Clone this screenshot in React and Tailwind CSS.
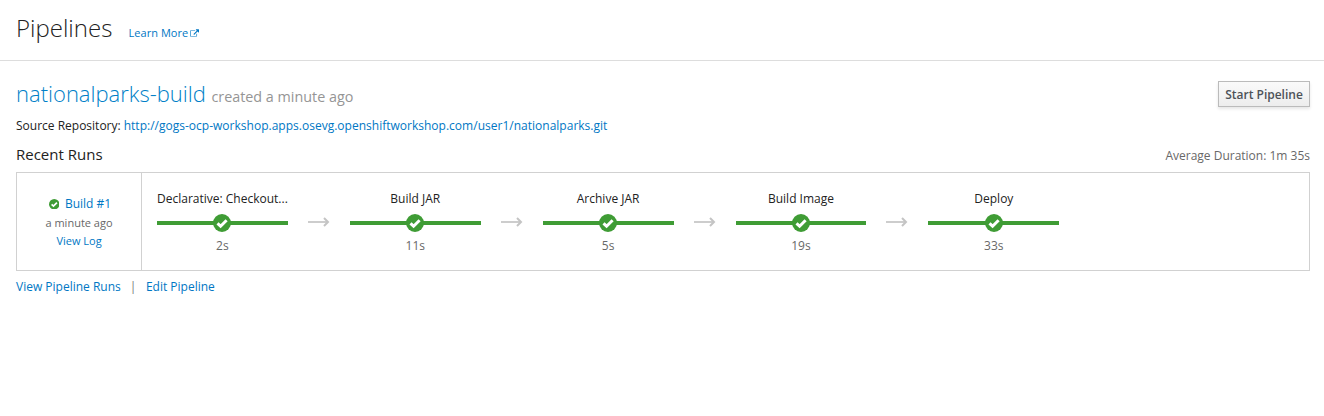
const stages = [
  { name: 'Declarative: Checkout...', time: '2s' },
  { name: 'Build JAR', time: '11s' },
  { name: 'Archive JAR', time: '5s' },
  { name: 'Build Image', time: '19s' },
  { name: 'Deploy', time: '33s' },
];

function ExternalLink() {
  return (
    <svg className="ml-[2px] h-[9px] w-[9px]" viewBox="0 0 1792 1664" fill="currentColor">
      <path d="M1408 928v320q0 119-84.500 203.500t-203.500 84.500h-832q-119 0-203.500-84.500t-84.500-203.500v-832q0-119 84.500-203.500t203.500-84.500h704q14 0 23 9t9 23v64q0 14-9 23t-23 9h-704q-66 0-113 47t-47 113v832q0 66 47 113t113 47h832q66 0 113-47t47-113v-320q0-14 9-23t23-9h64q14 0 23 9t9 23zm384-864v512q0 26-19 45t-45 19-45-19l-176-176-652 652q-10 10-23 10t-23-10l-114-114q-10-10-10-23t10-23l652-652-176-176q-19-19-19-45t19-45 45-19h512q26 0 45 19t19 45z" />
    </svg>
  );
}

function Check({ className }) {
  return (
    <svg className={className} viewBox="0 0 18 18">
      <circle cx="9" cy="9" r="9" fill="#3f9c35" />
      <path d="M4.500 9.300L7.600 12.200L13.600 6.200" fill="none" stroke="#fff" strokeWidth="3" />
    </svg>
  );
}

function Arrow() {
  return (
    <svg className="mt-[44px] ml-[20px] h-[10px] w-[22px] shrink-0" viewBox="0 0 22 10" fill="none" stroke="#c4c4c4">
      <path d="M0 5H20" strokeWidth="1.700" />
      <path d="M16 1L20 5L16 9" strokeWidth="2" />
    </svg>
  );
}

function Stage({ name, time, last }) {
  return (
    <div className="flex w-[192.870px] shrink-0">
      <div className="flex w-[130.800px] shrink-0 flex-col items-center">
        <div className="mt-[16px] h-[20px] whitespace-nowrap text-[12px] leading-[20px] text-[#222]">{name}</div>
        <div className="mt-[5px] grid h-[18px] w-full items-center justify-items-center">
          <div className="col-start-1 row-start-1 h-[4px] w-full bg-[#3f9c35]" />
          <Check className="col-start-1 row-start-1 h-[18px] w-[18px]" />
        </div>
        <div className="mt-[4px] text-[12px] leading-[20px] text-[#686868]">{time}</div>
      </div>
      {!last && <Arrow />}
    </div>
  );
}

export default function App() {
  return (
    <div className="h-[416px] bg-white font-['Open_Sans',sans-serif] text-[12px] text-[#222]">
      <header className="flex h-[61px] items-start border-b border-[#ddd] px-4">
        <h1 className="mt-[12px] w-[112.500px] text-[24px] leading-[32px] font-light">Pipelines</h1>
        <a className="mt-[24px] flex items-center text-[11px] leading-[18px] tracking-[0.050px] text-[#0077c4]">Learn More<ExternalLink /></a>
      </header>
      <main className="pr-[14px] pl-4">
        <div className="flex h-[55px] items-start justify-between">
          <div className="mt-[16px] flex items-baseline leading-[32px]">
            <h2 className="text-[22px] font-light text-[#007fc8]">nationalparks-build</h2>
            <span className="ml-[5.500px] text-[14.350px] text-[#959595]">created a minute ago</span>
          </div>
          <button className="mt-[20px] h-[26px] w-[92px] border border-[#bbb] bg-linear-to-b from-[#fafafa] to-[#ededed] pt-[2px] text-[12px] font-semibold text-[#4d5258] shadow-[0_2px_3px_rgba(3,3,3,0.1)]">Start Pipeline</button>
        </div>
        <div className="flex h-[20px] items-center gap-[3px] whitespace-nowrap">
          <span>Source Repository:</span>
          <a className="tracking-[0.010px] text-[#0077c4]">http://gogs-ocp-workshop.apps.osevg.openshiftworkshop.com/user1/nationalparks.git</a>
        </div>
        <div className="flex h-[36px] items-start justify-between">
          <h3 className="mt-[8px] text-[15px] leading-[20px]">Recent Runs</h3>
          <span className="mt-[10px] text-[12px] leading-[20px] text-[#686868]">Average Duration: 1m 35s</span>
        </div>
        <section className="flex h-[99px] border border-[#d1d1d1]">
          <div className="flex w-[125px] shrink-0 flex-col items-center border-r border-[#d1d1d1] pt-[21px]">
            <div className="ml-[2px] flex h-[20px] items-center gap-[5.500px] text-[12px] text-[#0077c4]">
              <Check className="h-[10.500px] w-[10.500px]" />
              <span>Build #1</span>
            </div>
            <div className="h-[18px] text-[11px] leading-[18px] text-[#686868]">a minute ago</div>
            <a className="h-[18px] text-[11px] leading-[18px] text-[#0077c4]">View Log</a>
          </div>
          <div className="flex pl-[15px]">
            {stages.map((s, i) => (
              <Stage key={s.name} {...s} last={i === stages.length - 1} />
            ))}
          </div>
        </section>
        <footer className="mt-[6px] flex h-[20px] items-center">
          <a className="text-[#0077c4]">View Pipeline Runs</a>
          <span className="mr-[9.500px] ml-[9px] text-[#777]">|</span>
          <a className="text-[#0077c4]">Edit Pipeline</a>
        </footer>
      </main>
    </div>
  );
}
